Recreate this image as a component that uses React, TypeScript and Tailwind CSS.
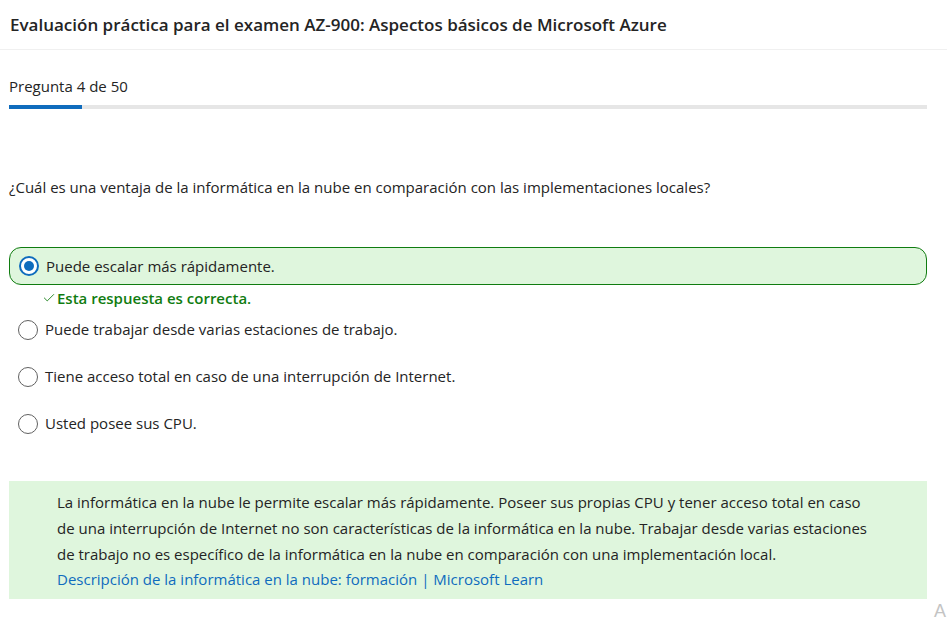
import { Check } from 'lucide-react';

const options = [
  { id: 1, text: 'Puede escalar más rápidamente.', selected: true },
  { id: 2, text: 'Puede trabajar desde varias estaciones de trabajo.', selected: false },
  { id: 3, text: 'Tiene acceso total en caso de una interrupción de Internet.', selected: false },
  { id: 4, text: 'Usted posee sus CPU.', selected: false },
];

function Radio({ checked }: { checked: boolean }) {
  if (checked) {
    return (
      <span className="w-[20px] h-[20px] rounded-full border-[2px] border-[#0f6cbd] flex items-center justify-center shrink-0 bg-white">
        <span className="w-[10px] h-[10px] rounded-full bg-[#0f6cbd]" />
      </span>
    );
  }
  return <span className="w-[20px] h-[20px] rounded-full border border-[#616161] shrink-0 bg-white" />;
}

export default function App() {
  return (
    <div className="w-[947px] h-[628px] bg-white text-[#242424] font-['Open_Sans',sans-serif] overflow-hidden relative">
      {/* Header */}
      <div className="h-[50px] border-b border-[#f0f0f0] flex items-center pl-[10px]">
        <h1 className="text-[17px] font-semibold text-[#242424]">
          Evaluación práctica para el examen AZ-900: Aspectos básicos de Microsoft Azure
        </h1>
      </div>

      <div className="px-[9px] w-[936px]">
        {/* Progress */}
        <p className="text-[15px] mt-[26px] leading-[20px]">Pregunta 4 de 50</p>
        <div className="mt-[9px] h-[4px] bg-[#e6e6e6] w-full">
          <div className="h-full w-[73px] bg-[#0f6cbd]" />
        </div>

        {/* Question */}
        <p className="mt-[67px] text-[15px] leading-[22px]">
          ¿Cuál es una ventaja de la informática en la nube en comparación con las implementaciones locales?
        </p>

        {/* Options */}
        <div className="mt-[49px] flex flex-col">
          {options.map((o) =>
            o.selected ? (
              <div key={o.id}>
                <div className="h-[38px] rounded-[12px] border border-[#107c10] bg-[#dff6dd] flex items-center gap-[7px] pl-[9px]">
                  <Radio checked />
                  <span className="text-[15px]">{o.text}</span>
                </div>
                <div className="flex items-center gap-[1px] pl-[33px] mt-[5px] h-[16px] text-[#107c10]">
                  <Check size={14} strokeWidth={1.5} />
                  <span className="text-[15px] font-semibold">Esta respuesta es correcta.</span>
                </div>
              </div>
            ) : (
              <div key={o.id} className="h-[47px] flex items-center gap-[7px] pl-[9px]">
                <Radio checked={false} />
                <span className="text-[15px]">{o.text}</span>
              </div>
            )
          )}
        </div>

        {/* Explanation */}
        <div className="mt-[34px] bg-[#dff6dd] pl-[48px] pt-[8px] pb-[8px] text-[15px] leading-[26px]">
          <p>
            <span className="block">La informática en la nube le permite escalar más rápidamente. Poseer sus propias CPU y tener acceso total en caso</span>
            <span className="block">de una interrupción de Internet no son características de la informática en la nube. Trabajar desde varias estaciones</span>
            <span className="block">de trabajo no es específico de la informática en la nube en comparación con una implementación local.</span>
          </p>
          <a className="text-[#0f6cbd] leading-[24px] block">Descripción de la informática en la nube: formación | Microsoft Learn</a>
        </div>
      </div>

      <span className="absolute left-[934px] top-[598px] text-[18px] text-[#c4c4c4] font-['Liberation_Sans',sans-serif]">A</span>
    </div>
  );
}
